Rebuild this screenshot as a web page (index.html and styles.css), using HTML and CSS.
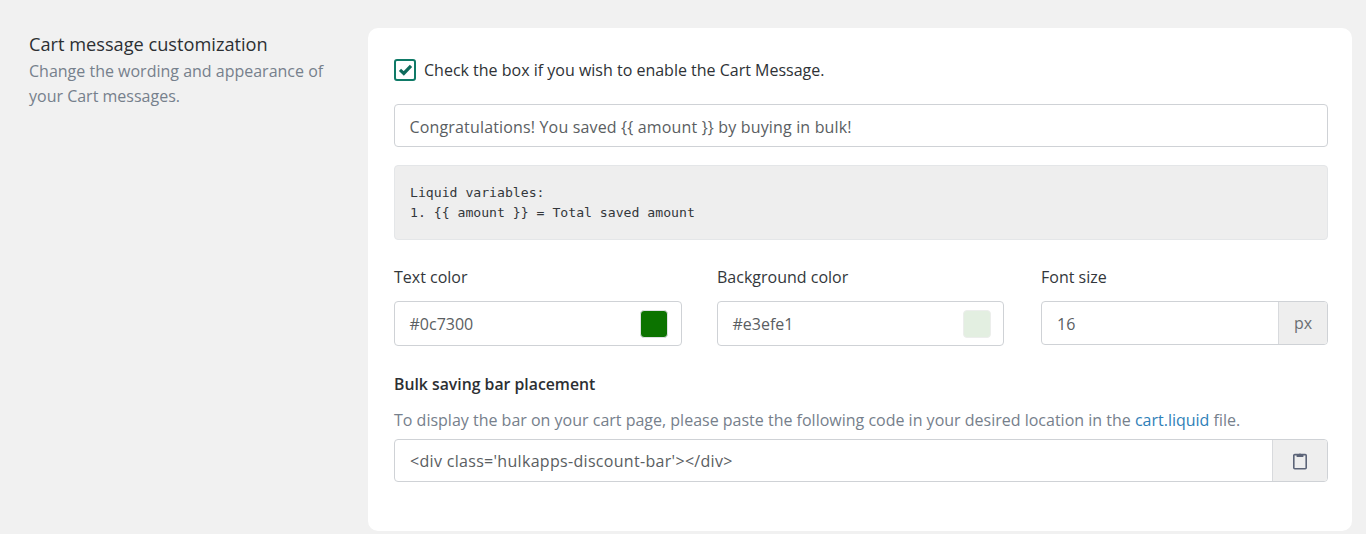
FILE: index.html
```html
<!DOCTYPE html>
<html lang="en">
<head>
<meta charset="utf-8">
<title>Cart message customization</title>
<link rel="stylesheet" href="styles.css">
</head>
<body>
<main class="layout">
  <aside class="intro">
    <h2 class="intro-title">Cart message customization</h2>
    <p class="intro-text">Change the wording and appearance of your Cart messages.</p>
  </aside>
  <section class="card">
    <label class="check-row">
      <span class="checkbox"><svg width="15" height="14" viewBox="0 0 15 14"><path d="M2 6.8 5.8 10.4 13 2.8" fill="none" stroke="#0f6b5c" stroke-width="3.2"/></svg></span>
      <span>Check the box if you wish to enable the Cart Message.</span>
    </label>
    <div class="field message">Congratulations! You saved {{ amount }} by buying in bulk!</div>
    <pre class="code">Liquid variables:
1. {{ amount }} = Total saved amount</pre>
    <div class="columns">
      <div class="col">
        <div class="label">Text color</div>
        <div class="field color"><span>#0c7300</span><span class="swatch swatch-green"></span></div>
      </div>
      <div class="col">
        <div class="label">Background color</div>
        <div class="field color"><span>#e3efe1</span><span class="swatch swatch-pale"></span></div>
      </div>
      <div class="col col-size">
        <div class="label">Font size</div>
        <div class="group size">
          <div class="group-main">16</div>
          <div class="addon addon-px">px</div>
        </div>
      </div>
    </div>
    <h3 class="section-title">Bulk saving bar placement</h3>
    <p class="hint">To display the bar on your cart page, please paste the following code in your desired location in the <a href="#" class="link">cart.liquid</a> file.</p>
    <div class="group snippet">
      <div class="group-main snippet-text">&lt;div class='hulkapps-discount-bar'&gt;&lt;/div&gt;</div>
      <div class="addon addon-copy">
        <svg width="16" height="18" viewBox="0 0 16 18"><rect x="1.8" y="2.6" width="12.4" height="14.2" rx="1" fill="none" stroke="#5c6478" stroke-width="1.6"/><path d="M4.6 5V2.4h2.2a1.3 1.3 0 0 1 2.4 0h2.2V5z" fill="#5c6478"/></svg>
      </div>
    </div>
  </section>
</main>
</body>
</html>
```
FILE: styles.css
```css
* { box-sizing: border-box; }
html, body { margin: 0; height: 534px; overflow: hidden; }
body {
  background: #f1f1f1;
  font-family: "Open Sans", "Noto Sans", "Liberation Sans", sans-serif;
  font-size: 16px;
  color: #3f4347;
}
.layout {
  display: flex;
  padding: 28px 14px 0 29px;
  gap: 30px;
}
.intro { width: 309px; flex: none; }
.intro-title {
  margin: 4px 0 0;
  font-size: 18.2px;
  line-height: 24px;
  font-weight: 400;
  color: #2c2f33;
}
.intro-text {
  margin: 3px 0 0;
  font-size: 16px;
  line-height: 25px;
  color: #76808c;
}
.card {
  flex: 1;
  height: 503px;
  background: #fff;
  border-radius: 10px;
  padding: 30px 24px 0 26px;
}
.check-row {
  display: flex;
  align-items: center;
  gap: 8px;
  height: 24px;
  color: #2e3236;
}
.checkbox {
  width: 22px;
  height: 22px;
  border: 2px solid #0f7a67;
  border-radius: 3px;
  display: flex;
  align-items: center;
  justify-content: center;
}
.field, .group {
  border: 1px solid #cfd2d6;
  border-radius: 4px;
  background: #fff;
  color: #5a5e62;
}
.message {
  margin-top: 22px;
  height: 43px;
  line-height: 44px;
  padding-left: 14.5px;
  letter-spacing: 0.16px;
}
.code {
  margin: 18px 0 0;
  height: 75px;
  padding: 17px 15px;
  background: #eeeeee;
  border: 1px solid #e4e6e8;
  border-radius: 4px;
  font-family: "DejaVu Sans Mono", "Liberation Mono", monospace;
  font-size: 13.15px;
  line-height: 20px;
  color: #33373b;
}
.columns {
  display: grid;
  grid-template-columns: 288px 287px 289px;
  gap: 35px;
  margin-top: 25px;
}
.col-size { margin-left: 2px; }
.label { line-height: 24px; color: #33373b; }
.color {
  margin-top: 12px;
  height: 45px;
  padding: 0 13px 0 14.5px;
  display: flex;
  align-items: center;
  justify-content: space-between;
}
.swatch { width: 28px; height: 28px; border-radius: 4px; border: 1px solid #dfe1e4; }
.swatch-green { background: #0c7300; }
.swatch-pale { background: #e3efe1; margin-right: -1px; border-color: #eceeec; }
.group { display: flex; overflow: hidden; }
.size { margin-top: 12px; height: 44px; }
.group-main { flex: 1; padding-left: 15px; line-height: 44px; }
.snippet-text { line-height: 43px; letter-spacing: 0.31px; }
.addon {
  flex: none;
  background: #eeeeee;
  border-left: 1px solid #d8dadd;
  display: flex;
  align-items: center;
  justify-content: center;
}
.addon-px { width: 49px; color: #6b6f73; }
.addon-copy { width: 55px; }
.section-title {
  margin: 26px 0 0;
  font-size: 15.8px;
  line-height: 24px;
  font-weight: 600;
  color: #2c2f33;
}
.hint {
  margin: 12px 0 0;
  line-height: 24px;
  color: #76808c;
}
.link { color: #2f7fb8; text-decoration: none; }
.snippet { margin-top: 7px; height: 43px; }
```
